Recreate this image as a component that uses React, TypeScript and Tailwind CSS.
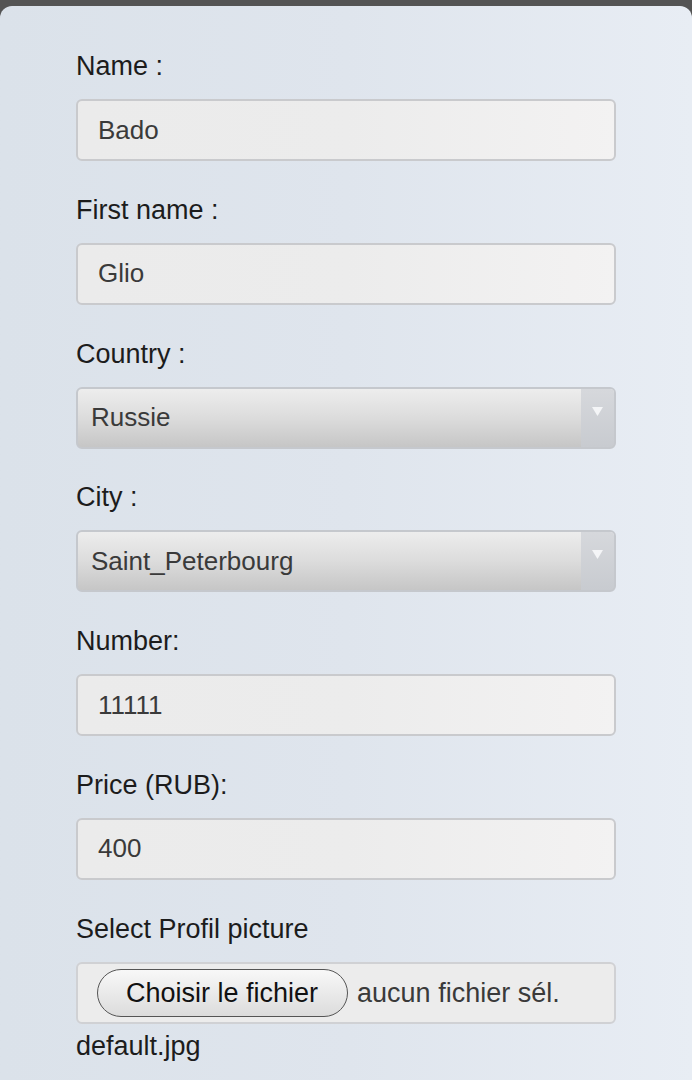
import React from 'react'

const font = { fontFamily: '"Liberation Sans", Arial, sans-serif' }

function Label({ children }: { children: React.ReactNode }) {
  return <div className="h-[28px] leading-[28px] text-[27px] text-[#1c1c1c] mb-[19px]">{children}</div>
}

function TextBox({ value }: { value: string }) {
  return (
    <div className="h-[62px] rounded-[6px] border-2 border-[#c9cacd] bg-gradient-to-r from-[#ebebeb] via-[#ececec] to-[#f3f2f2] flex items-center pl-[20px] text-[26px] text-[#3a3a3a]">
      {value}
    </div>
  )
}

function SelectBox({ value }: { value: string }) {
  return (
    <div className="h-[62px] rounded-[6px] border-2 border-[#c5c8cd] bg-gradient-to-b from-[#ededed] via-[#dcdcdc] to-[#c6c6c6] flex items-stretch text-[26px] text-[#3a3a3a] overflow-hidden">
      <div className="flex-1 flex items-center pl-[13px]">{value}</div>
      <div className="w-[33px] bg-gradient-to-b from-[#d6d8dc] to-[#c8cbd0] flex items-start justify-center pt-[18px]">
        <svg width="11" height="9" viewBox="0 0 11 9">
          <path d="M0 0 L11 0 L5.5 9 Z" fill="#f4f5f7" />
        </svg>
      </div>
    </div>
  )
}

const fields: { label: string; value: string; select?: boolean }[] = [
  { label: 'Name :', value: 'Bado' },
  { label: 'First name :', value: 'Glio' },
  { label: 'Country :', value: 'Russie', select: true },
  { label: 'City :', value: 'Saint_Peterbourg', select: true },
  { label: 'Number:', value: '11111' },
  { label: 'Price (RUB):', value: '400' },
]

export default function App() {
  return (
    <div className="w-[692px] h-[1080px] bg-[#545454] overflow-hidden" style={font}>
      <div className="h-[6px]" />
      <div className="h-[1074px] rounded-t-[12px] bg-gradient-to-r from-[#dbe2ea] via-[#dfe5ed] to-[#e8edf4] px-[76px] pt-[46px]">
        {fields.map((f) => (
          <div key={f.label} className="mb-[34.8px]">
            <Label>{f.label}</Label>
            {f.select ? <SelectBox value={f.value} /> : <TextBox value={f.value} />}
          </div>
        ))}
        <div>
          <Label>Select Profil picture</Label>
          <div className="h-[62px] rounded-[6px] border-2 border-[#d0d1d4] bg-[#ececec] flex items-center pl-[19px] text-[27px]">
            <div className="h-[48px] pl-[28px] pr-[29px] rounded-full border-[1.5px] border-[#555] bg-gradient-to-b from-[#f8f8f8] to-[#dcdcdc] flex items-center text-[#111]">
              Choisir le fichier
            </div>
            <span className="ml-[9px] text-[#3a3a3a]">aucun fichier sél.</span>
          </div>
          <div className="mt-[8px] h-[28px] leading-[28px] text-[27px] text-[#1c1c1c]">default.jpg</div>
        </div>
      </div>
    </div>
  )
}
